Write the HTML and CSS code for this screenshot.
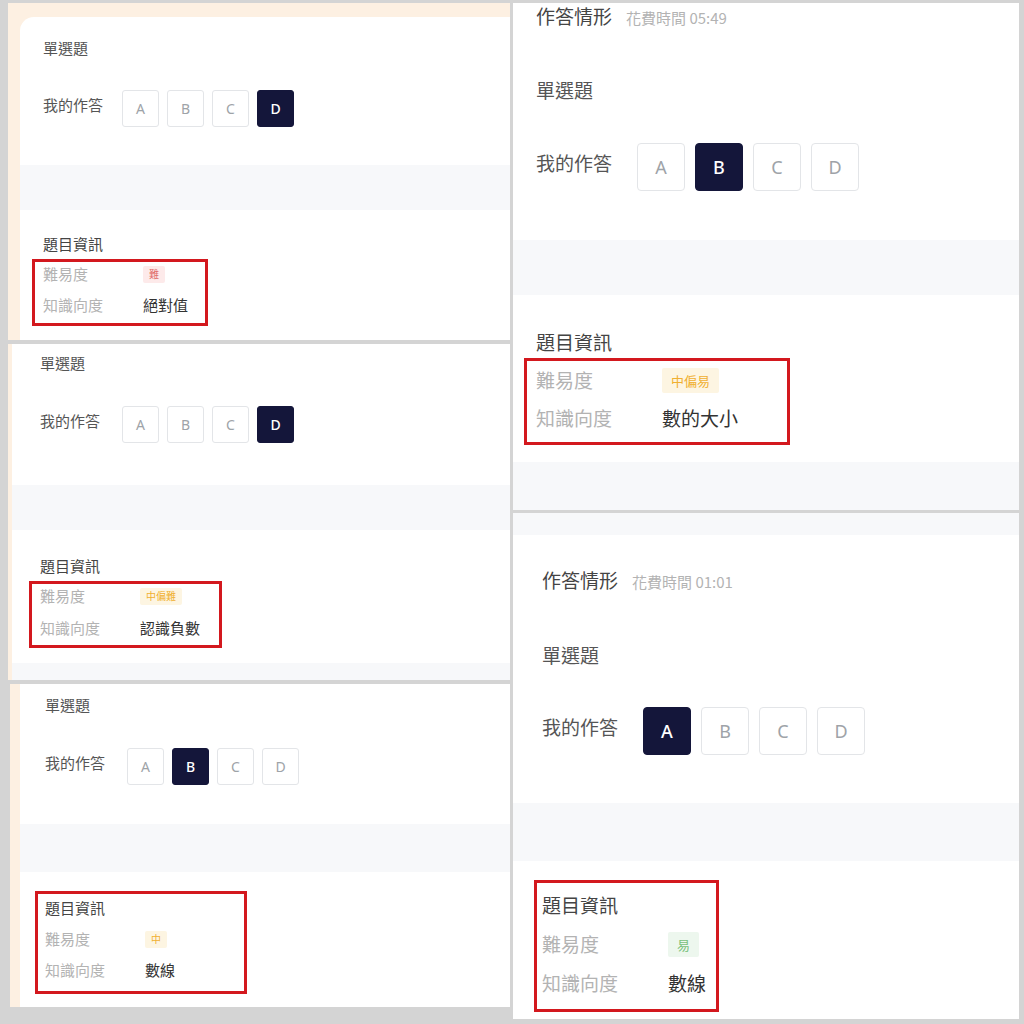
FILE: index.html
```html
<!DOCTYPE html>
<html lang="zh-Hant">
<head>
  <meta charset="UTF-8" />
  <meta name="viewport" content="width=device-width, initial-scale=1.0"/>
  <title>題目資訊</title>
  <link rel="stylesheet" href="styles.css">
</head>
<body>
  <div class="collage">
    <div class="col col-left">

      <!-- 1: 絕對值 -->
      <section class="shot shot-sm p1">
        <div class="card">
          <div class="qtype">單選題</div>
          <div class="answer">
            <span class="answer-label">我的作答</span>
            <div class="options">
              <span class="opt">A</span><span class="opt">B</span><span class="opt">C</span><span class="opt picked">D</span>
            </div>
          </div>
          <div class="band"></div>
          <div class="info-title">題目資訊</div>
          <div class="mark">
            <div class="meta-row"><span class="meta-key">難易度</span><span class="level level-hard">難</span></div>
            <div class="meta-row"><span class="meta-key">知識向度</span><span class="meta-val">絕對值</span></div>
          </div>
        </div>
      </section>

      <!-- 2: 認識負數 -->
      <section class="shot shot-sm p2">
        <div class="card">
          <div class="qtype">單選題</div>
          <div class="answer">
            <span class="answer-label">我的作答</span>
            <div class="options">
              <span class="opt">A</span><span class="opt">B</span><span class="opt">C</span><span class="opt picked">D</span>
            </div>
          </div>
          <div class="band"></div>
          <div class="info-title">題目資訊</div>
          <div class="mark">
            <div class="meta-row"><span class="meta-key">難易度</span><span class="level level-mid">中偏難</span></div>
            <div class="meta-row"><span class="meta-key">知識向度</span><span class="meta-val">認識負數</span></div>
          </div>
          <div class="band band-end"></div>
        </div>
      </section>

      <!-- 3: 數線 (中) -->
      <section class="shot shot-sm p3">
        <div class="card">
          <div class="qtype">單選題</div>
          <div class="answer">
            <span class="answer-label">我的作答</span>
            <div class="options">
              <span class="opt">A</span><span class="opt picked">B</span><span class="opt">C</span><span class="opt">D</span>
            </div>
          </div>
          <div class="band"></div>
          <div class="mark">
            <div class="info-title">題目資訊</div>
            <div class="meta-row"><span class="meta-key">難易度</span><span class="level level-mid">中</span></div>
            <div class="meta-row"><span class="meta-key">知識向度</span><span class="meta-val">數線</span></div>
          </div>
        </div>
      </section>
    </div>

    <div class="col col-right">

      <!-- 4: 數的大小 -->
      <section class="shot shot-lg p4">
        <div class="card">
          <div class="status"><span class="status-title">作答情形</span><span class="status-time">花費時間 05:49</span></div>
          <div class="qtype">單選題</div>
          <div class="answer">
            <span class="answer-label">我的作答</span>
            <div class="options">
              <span class="opt">A</span><span class="opt picked">B</span><span class="opt">C</span><span class="opt">D</span>
            </div>
          </div>
          <div class="band"></div>
          <div class="info-title">題目資訊</div>
          <div class="mark">
            <div class="meta-row"><span class="meta-key">難易度</span><span class="level level-mid">中偏易</span></div>
            <div class="meta-row"><span class="meta-key">知識向度</span><span class="meta-val">數的大小</span></div>
          </div>
          <div class="band band-end"></div>
        </div>
      </section>

      <!-- 5: 數線 (易) -->
      <section class="shot shot-lg p5">
        <div class="card">
          <div class="band band-start"></div>
          <div class="status"><span class="status-title">作答情形</span><span class="status-time">花費時間 01:01</span></div>
          <div class="qtype">單選題</div>
          <div class="answer">
            <span class="answer-label">我的作答</span>
            <div class="options">
              <span class="opt picked">A</span><span class="opt">B</span><span class="opt">C</span><span class="opt">D</span>
            </div>
          </div>
          <div class="band"></div>
          <div class="mark">
            <div class="info-title">題目資訊</div>
            <div class="meta-row"><span class="meta-key">難易度</span><span class="level level-easy">易</span></div>
            <div class="meta-row"><span class="meta-key">知識向度</span><span class="meta-val">數線</span></div>
          </div>
        </div>
      </section>
    </div>
  </div>
</body>
</html>
```

FILE: styles.css
```css
:root {
  --frame: #d4d4d4;
  --peach: #fdf0e2;
  --band: #f7f8fa;
  --ink: #3a3a3a;
  --label: #555;
  --muted: #b3b3b3;
  --navy: #14163a;
  --mark: #d3181e;
}

* {
  box-sizing: border-box;
}

body {
  margin: 0;
  width: 1024px;
  height: 1024px;
  overflow: hidden;
  background: var(--frame);
  font-family: "Noto Sans CJK TC", "Noto Sans", sans-serif;
  color: var(--ink);
}

.collage {
  display: grid;
  grid-template-columns: 502px 506px;
  column-gap: 3px;
  padding: 3px 0 0 8px;
}

.col {
  display: flex;
  flex-direction: column;
}

.col-left {
  gap: 4px;
}

.col-right {
  gap: 3px;
}

.shot {
  overflow: hidden;
  background: #fff;
}

.card {
  height: 100%;
  background: #fff;
  display: flex;
  flex-direction: column;
  overflow: hidden;
}

.qtype,
.answer-label {
  color: var(--label);
}

.answer {
  display: flex;
  align-items: flex-start;
}

.answer-label {
  flex-shrink: 0;
}

.options {
  display: flex;
}

.opt {
  display: flex;
  align-items: center;
  justify-content: center;
  border: 1px solid #e3e5e8;
  color: #9ea3a8;
  font-family: "Noto Sans", sans-serif;
  background: #fff;
}

.opt.picked {
  background: var(--navy);
  border-color: var(--navy);
  color: #fff;
  font-weight: 500;
}

.band {
  background: var(--band);
  flex-shrink: 0;
}

.band-end {
  flex-grow: 1;
}

.info-title {
  color: #444;
}

.mark {
  align-self: flex-start;
  border: 3px solid var(--mark);
  display: flex;
  flex-direction: column;
}

.meta-row {
  display: flex;
  align-items: center;
}

.meta-key {
  color: var(--muted);
  flex-shrink: 0;
}

.meta-val {
  color: #333;
}

.level {
  display: inline-flex;
  align-items: center;
  justify-content: center;
  line-height: 1;
  border-radius: 2px;
}

.level-hard {
  color: #e06a6a;
  background: #fdeaea;
}

.level-mid {
  color: #f0b031;
  background: #fdf5e2;
}

.level-easy {
  color: #79c07a;
  background: #edf7ee;
}

.status-title {
  color: #444;
}

.status-time {
  color: var(--muted);
  margin-left: 14px;
}

/* small shots (left column) */
.shot-sm {
  font-size: 15px;
  line-height: 20px;
}

.shot-sm .answer-label {
  width: 82px;
  padding-top: 5px;
}

.shot-sm .options {
  gap: 8px;
}

.shot-sm .opt {
  width: 37px;
  height: 37px;
  font-size: 14px;
  border-radius: 3px;
}

.shot-sm .meta-row {
  height: 20px;
}

.shot-sm .meta-key {
  width: 100px;
}

.shot-sm .level {
  height: 17px;
  padding: 0 6px;
  font-size: 10px;
}

/* large shots (right column) */
.shot-lg {
  font-size: 19px;
  line-height: 26px;
}

.shot-lg .status-time {
  font-size: 15px;
}

.shot-lg .answer-label {
  width: 101px;
  padding-top: 7px;
}

.shot-lg .options {
  gap: 10px;
}

.shot-lg .opt {
  width: 48px;
  height: 48px;
  font-size: 18px;
  border-radius: 4px;
}

.shot-lg .meta-row {
  height: 26px;
}

.shot-lg .meta-key {
  width: 126px;
}

.shot-lg .level {
  height: 25px;
  padding: 0 9px;
  font-size: 13px;
}

/* shot 1 */
.p1 {
  height: 337px;
  background: var(--peach);
  padding: 14px 0 0 12px;
}

.p1 .card {
  border-top-left-radius: 14px;
  padding: 21px 0 0 23px;
}

.p1 .answer-label {
  width: 79px;
}

.p1 .answer {
  margin-top: 32px;
}

.p1 .band {
  margin: 38px 0 0 -23px;
  height: 45px;
}

.p1 .info-title {
  margin-top: 24px;
}

.p1 .mark {
  margin: 5px 0 0 -11px;
  width: 176px;
  padding: 2px 8px 8px;
  gap: 11px;
}

/* shot 2 */
.p2 {
  height: 336px;
  background: var(--peach);
  padding-left: 4px;
}

.p2 .card {
  padding: 9px 0 0 28px;
}

.p2 .answer {
  margin-top: 33px;
}

.p2 .band {
  margin: 42px 0 0 -28px;
  height: 45px;
}

.p2 .info-title {
  margin-top: 26px;
}

.p2 .mark {
  margin: 5px 0 0 -11px;
  width: 193px;
  padding: 2px 8px 7px;
  gap: 12px;
}

.p2 .band-end {
  margin-top: 15px;
}

/* shot 3 */
.p3 {
  height: 323px;
  margin-left: 2px;
  background: var(--peach);
  padding-left: 10px;
}

.p3 .card {
  padding: 11px 0 0 25px;
}

.p3 .answer {
  margin-top: 33px;
}

.p3 .band {
  margin: 39px 0 0 -25px;
  height: 48px;
}

.p3 .mark {
  margin: 19px 0 0 -10px;
  width: 212px;
  padding: 4px 7px 11px;
  gap: 11px;
}

/* shot 4 */
.p4 {
  height: 507px;
}

.p4 .card {
  padding-left: 23px;
}

.p4 .qtype {
  margin-top: 46px;
}

.p4 .answer {
  margin-top: 40px;
}

.p4 .band {
  margin: 49px 0 0 -23px;
  height: 55px;
}

.p4 .info-title {
  margin-top: 34px;
}

.p4 .mark {
  margin: 3px 0 0 -12px;
  width: 266px;
  padding: 6px 9px 11px;
  gap: 12px;
}

.p4 .band-end {
  margin-top: 17px;
}

/* shot 5 */
.p5 {
  height: 506px;
}

.p5 .card {
  padding-left: 29px;
}

.p5 .status {
  margin-top: 32px;
}

.p5 .qtype {
  margin-top: 47px;
}

.p5 .answer {
  margin-top: 39px;
}

.p5 .band {
  margin: 48px 0 0 -29px;
  height: 58px;
}

.p5 .band-start {
  margin-top: 0;
  height: 22px;
}

.p5 .mark {
  margin: 19px 0 0 -8px;
  width: 185px;
  padding: 9px 5px 13px;
  gap: 13px;
}
```
